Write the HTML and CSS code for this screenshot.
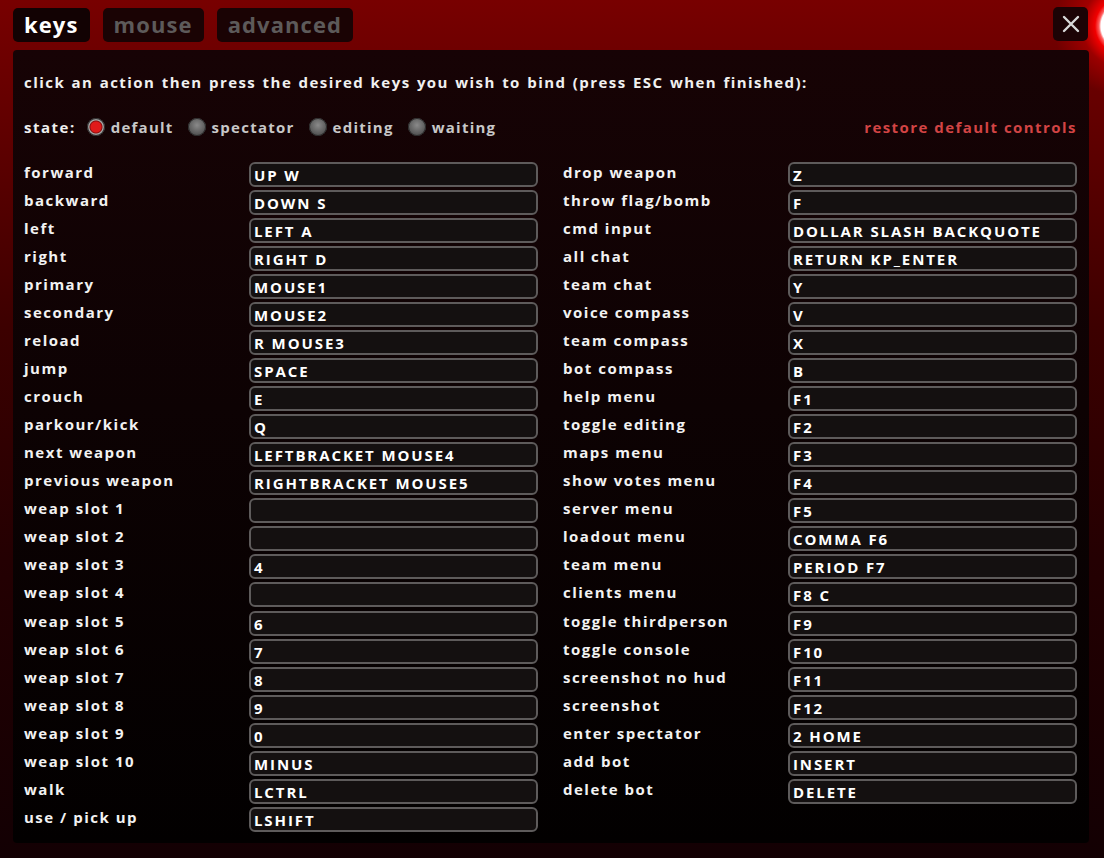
FILE: index.html
```html
<!DOCTYPE html>
<html>
<head>
<meta charset="utf-8">
<link rel="stylesheet" href="styles.css">
</head>
<body>
<div class="screen">
  <header class="topbar">
    <nav class="tabs">
      <div class="tab active">keys</div>
      <div class="tab">mouse</div>
      <div class="tab">advanced</div>
    </nav>
    <div class="close">
      <svg width="18" height="18" viewBox="0 0 18 18"><path d="M2 2 L16 16 M16 2 L2 16" stroke="#d8d8d8" stroke-width="2.4" stroke-linecap="round"/></svg>
    </div>
  </header>
  <main class="panel">
    <p class="hint">click an action then press the desired keys you wish to bind (press ESC when finished):</p>
    <div class="staterow">
      <div class="states">
        <span class="statelabel">state:</span>
        <span class="radio on"></span><span class="opt">default</span>
        <span class="radio"></span><span class="opt">spectator</span>
        <span class="radio"></span><span class="opt">editing</span>
        <span class="radio"></span><span class="opt">waiting</span>
      </div>
      <span class="restore">restore default controls</span>
    </div>
    <div class="bindings">
      <div class="col">
        <div class="row"><span class="act">forward</span><span class="key">UP W</span></div>
        <div class="row"><span class="act">backward</span><span class="key">DOWN S</span></div>
        <div class="row"><span class="act">left</span><span class="key">LEFT A</span></div>
        <div class="row"><span class="act">right</span><span class="key">RIGHT D</span></div>
        <div class="row"><span class="act">primary</span><span class="key">MOUSE1</span></div>
        <div class="row"><span class="act">secondary</span><span class="key">MOUSE2</span></div>
        <div class="row"><span class="act">reload</span><span class="key">R MOUSE3</span></div>
        <div class="row"><span class="act">jump</span><span class="key">SPACE</span></div>
        <div class="row"><span class="act">crouch</span><span class="key">E</span></div>
        <div class="row"><span class="act">parkour/kick</span><span class="key">Q</span></div>
        <div class="row"><span class="act">next weapon</span><span class="key">LEFTBRACKET MOUSE4</span></div>
        <div class="row"><span class="act">previous weapon</span><span class="key">RIGHTBRACKET MOUSE5</span></div>
        <div class="row"><span class="act">weap slot 1</span><span class="key"></span></div>
        <div class="row"><span class="act">weap slot 2</span><span class="key"></span></div>
        <div class="row"><span class="act">weap slot 3</span><span class="key">4</span></div>
        <div class="row"><span class="act">weap slot 4</span><span class="key"></span></div>
        <div class="row"><span class="act">weap slot 5</span><span class="key">6</span></div>
        <div class="row"><span class="act">weap slot 6</span><span class="key">7</span></div>
        <div class="row"><span class="act">weap slot 7</span><span class="key">8</span></div>
        <div class="row"><span class="act">weap slot 8</span><span class="key">9</span></div>
        <div class="row"><span class="act">weap slot 9</span><span class="key">0</span></div>
        <div class="row"><span class="act">weap slot 10</span><span class="key">MINUS</span></div>
        <div class="row"><span class="act">walk</span><span class="key">LCTRL</span></div>
        <div class="row"><span class="act">use / pick up</span><span class="key">LSHIFT</span></div>
      </div>
      <div class="col">
        <div class="row"><span class="act">drop weapon</span><span class="key">Z</span></div>
        <div class="row"><span class="act">throw flag/bomb</span><span class="key">F</span></div>
        <div class="row"><span class="act">cmd input</span><span class="key">DOLLAR SLASH BACKQUOTE</span></div>
        <div class="row"><span class="act">all chat</span><span class="key">RETURN KP_ENTER</span></div>
        <div class="row"><span class="act">team chat</span><span class="key">Y</span></div>
        <div class="row"><span class="act">voice compass</span><span class="key">V</span></div>
        <div class="row"><span class="act">team compass</span><span class="key">X</span></div>
        <div class="row"><span class="act">bot compass</span><span class="key">B</span></div>
        <div class="row"><span class="act">help menu</span><span class="key">F1</span></div>
        <div class="row"><span class="act">toggle editing</span><span class="key">F2</span></div>
        <div class="row"><span class="act">maps menu</span><span class="key">F3</span></div>
        <div class="row"><span class="act">show votes menu</span><span class="key">F4</span></div>
        <div class="row"><span class="act">server menu</span><span class="key">F5</span></div>
        <div class="row"><span class="act">loadout menu</span><span class="key">COMMA F6</span></div>
        <div class="row"><span class="act">team menu</span><span class="key">PERIOD F7</span></div>
        <div class="row"><span class="act">clients menu</span><span class="key">F8 C</span></div>
        <div class="row"><span class="act">toggle thirdperson</span><span class="key">F9</span></div>
        <div class="row"><span class="act">toggle console</span><span class="key">F10</span></div>
        <div class="row"><span class="act">screenshot no hud</span><span class="key">F11</span></div>
        <div class="row"><span class="act">screenshot</span><span class="key">F12</span></div>
        <div class="row"><span class="act">enter spectator</span><span class="key">2 HOME</span></div>
        <div class="row"><span class="act">add bot</span><span class="key">INSERT</span></div>
        <div class="row"><span class="act">delete bot</span><span class="key">DELETE</span></div>
      </div>
    </div>
  </main>
</div>
</body>
</html>
```
FILE: styles.css
```css
html, body {
  margin: 0;
  padding: 0;
}
body {
  width: 1104px;
  height: 858px;
  overflow: hidden;
  font-family: "Open Sans", "DejaVu Sans", sans-serif;
  font-weight: 700;
  color: #e6e6e6;
  background:
    radial-gradient(circle at 1124px 26px, #ffffff 0 23px, #ff6060 25px, rgba(255,0,0,0.9) 29px, rgba(200,0,0,0.5) 42px, rgba(150,0,0,0) 70px),
    linear-gradient(180deg, #780000 0px, #620000 120px, #3c0000 330px, #240002 560px, #130003 858px);
}
.screen {
  display: flex;
  flex-direction: column;
}
.topbar {
  display: flex;
  justify-content: space-between;
  align-items: flex-start;
  padding: 7px 16px 0 13px;
  height: 43px;
}
.tabs {
  display: flex;
  gap: 13px;
  padding-top: 1px;
}
.tab {
  height: 34px;
  line-height: 33px;
  padding: 0 11px;
  background: #1a0304;
  border-radius: 5px;
  font-size: 22px;
  letter-spacing: 1.1px;
  color: #5d5a5a;
}
.tab.active {
  color: #ffffff;
  background: #120203;
}
.close {
  width: 35px;
  height: 34px;
  background: #1c0305;
  border-radius: 5px;
  display: flex;
  align-items: center;
  justify-content: center;
}
.panel {
  margin: 0 15px 0 13px;
  height: 793px;
  box-sizing: border-box;
  padding: 21px 12px 0 11px;
  border-radius: 4px;
  background: linear-gradient(180deg, #170305 0%, #0d0203 45%, #020000 100%);
}
.hint {
  margin: 0;
  height: 22px;
  line-height: 22px;
  font-size: 15px;
  letter-spacing: 1.45px;
  word-spacing: 1px;
  color: #f0f0f0;
}
.staterow {
  display: flex;
  justify-content: space-between;
  align-items: center;
  margin-top: 23px;
  height: 22px;
}
.states {
  display: flex;
  align-items: center;
}
.statelabel {
  font-size: 15px;
  letter-spacing: 1.5px;
  color: #f0f0f0;
  margin-right: 11px;
}
.opt {
  font-size: 15px;
  letter-spacing: 1.25px;
  color: #c8c8c8;
  margin-left: 6px;
  margin-right: 14px;
}
.radio {
  width: 18px;
  height: 18px;
  border-radius: 50%;
  box-sizing: border-box;
  background: radial-gradient(circle at 50% 40%, #8a8a8a 0, #5a5a5a 60%, #3a3a3a 100%);
  box-shadow: inset 0 0 0 1px #2a2a2a;
}
.radio.on {
  background: radial-gradient(circle, #e01a1a 0 5px, #8a1010 6px, #a8a8a8 7px, #6a6a6a 9px);
}
.restore {
  font-size: 15px;
  letter-spacing: 1.45px;
  color: #d24444;
}
.bindings {
  display: grid;
  grid-template-columns: 514px 514px;
  column-gap: 25px;
  margin-top: 24px;
}
.col {
  display: flex;
  flex-direction: column;
  gap: 3.04px;
}
.row {
  display: grid;
  grid-template-columns: 225px 289px;
  height: 25px;
}
.act {
  font-size: 15px;
  letter-spacing: 1.5px;
  line-height: 20px;
  color: #f2f2f2;
}
.key {
  box-sizing: border-box;
  height: 25px;
  border: 2px solid #5e5b5b;
  border-radius: 6px;
  background: #141010;
  padding: 0 3px;
  font-size: 15px;
  letter-spacing: 1.9px;
  line-height: 22px;
  color: #ffffff;
}
```
